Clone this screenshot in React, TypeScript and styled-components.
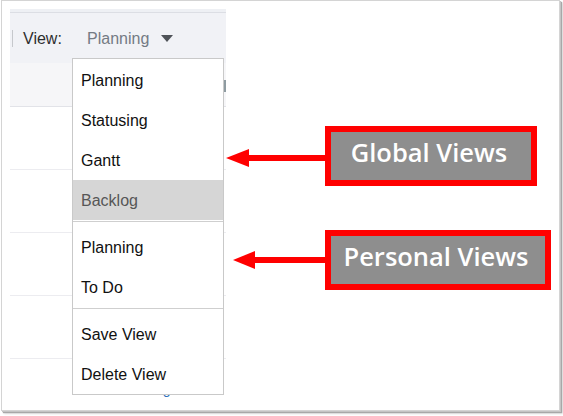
import styled, { createGlobalStyle } from "styled-components";

const GlobalStyle = createGlobalStyle`
  html, body {
    margin: 0;
    padding: 0;
    background: #ffffff;
  }
  body {
    width: 563px;
    height: 416px;
    overflow: hidden;
    font-family: "Liberation Sans", Arial, sans-serif;
  }
`;

const Window = styled.div`
  position: relative;
  margin-left: 1px;
  width: 559px;
  height: 411px;
  border: 1px solid #d4d4d4;
  background: #ffffff;
  box-shadow: 1px 1px 0 #c4c4c4, 2px 2px 1px #a8a8a8, 3px 3px 2px rgba(0, 0, 0, 0.12);
  padding: 8px 0 0 8px;
  box-sizing: border-box;
`;

const Panel = styled.div`
  width: 216px;
  height: 402px;
  overflow: hidden;
  display: flex;
  flex-direction: column;
`;

const TopStrip = styled.div`
  height: 3px;
  flex-shrink: 0;
  background: #eef0f4;
  border-bottom: 1px solid #dcdee4;
`;

const Toolbar = styled.div`
  height: 50px;
  flex-shrink: 0;
  background: #f1f2f6;
  display: flex;
  align-items: center;
  padding-left: 2px;
  padding-top: 1px;
  box-sizing: border-box;
  font-size: 16px;
`;

const Divider = styled.div`
  width: 1px;
  height: 17px;
  background: #c6c8cc;
  margin-right: 10px;
`;

const Label = styled.span`
  color: #2e2e2e;
  width: 64px;
`;

const Current = styled.span`
  color: #747b84;
  margin-right: 12px;
`;

const Caret = styled.span`
  width: 0;
  height: 0;
  border-left: 6px solid transparent;
  border-right: 6px solid transparent;
  border-top: 7px solid #4f5358;
`;

const SubHeader = styled.div`
  height: 26px;
  flex-shrink: 0;
  background: #f6f6f8;
  border-bottom: 1px solid #e2e3e8;
  display: flex;
  justify-content: flex-end;
  padding-top: 17px;
`;

const Handle = styled.div`
  width: 3px;
  height: 12px;
  background: #8e9ba1;
`;

const Row = styled.div`
  height: 40px;
  flex-shrink: 0;
  border-bottom: 1px solid #ececf0;
  display: flex;
  align-items: flex-start;
  padding: 22px 0 0 106px;
`;

const LinkText = styled.span`
  color: #2a6ebb;
  font-size: 14px;
  line-height: 16px;
`;

const Menu = styled.div`
  position: absolute;
  left: 70px;
  top: 57px;
  width: 150px;
  background: #ffffff;
  border: 1px solid #c9c9c9;
  padding-top: 1px;
`;

const Item = styled.div<{ $active?: boolean }>`
  height: 40px;
  box-sizing: border-box;
  padding: 2px 0 0 8px;
  display: flex;
  align-items: center;
  font-size: 16px;
  color: ${(p) => (p.$active ? "#565656" : "#111111")};
  background: ${(p) => (p.$active ? "#d6d6d6" : "transparent")};
`;

const Separator = styled.div`
  height: 1px;
  background: #cfcfcf;
  margin: 1px 0 5px;
`;

const Callout = styled.div<{ $left: number; $top: number; $width: number }>`
  position: absolute;
  left: ${(p) => p.$left}px;
  top: ${(p) => p.$top}px;
  width: ${(p) => p.$width}px;
  height: 60px;
  box-sizing: border-box;
  border: 6px solid #ff0000;
  background: #8e8e8e;
  color: #ffffff;
  font-family: "Open Sans", "Noto Sans", sans-serif;
  font-weight: 600;
  font-size: 25.5px;
  display: flex;
  align-items: center;
  justify-content: center;
  padding: 0 4px 8px 0;
`;

const Arrow = styled.svg<{ $left: number; $top: number }>`
  position: absolute;
  left: ${(p) => p.$left}px;
  top: ${(p) => p.$top}px;
`;

const globalViews = ["Planning", "Statusing", "Gantt", "Backlog"];
const personalViews = ["Planning", "To Do"];
const actions = ["Save View", "Delete View"];

const PointerArrow = ({ left, top, length, head }: { left: number; top: number; length: number; head: number }) => (
  <Arrow $left={left} $top={top} width={length} height={20} viewBox={`0 0 ${length} 20`}>
    <polygon points={`0,10 ${head},1 ${head},19`} fill="#ff0000" />
    <rect x={head - 1} y={7} width={length - head + 1} height={6} fill="#ff0000" />
  </Arrow>
);

export default function App() {
  return (
    <>
      <GlobalStyle />
      <Window>
        <Panel>
          <TopStrip />
          <Toolbar>
            <Divider />
            <Label>View:</Label>
            <Current>Planning</Current>
            <Caret />
          </Toolbar>
          <SubHeader>
            <Handle />
          </SubHeader>
          <Row />
          <Row />
          <Row />
          <Row />
          <Row>
            <LinkText>Planning</LinkText>
          </Row>
        </Panel>

        <Menu>
          {globalViews.map((v) => (
            <Item key={"g" + v} $active={v === "Backlog"}>
              {v}
            </Item>
          ))}
          <Separator />
          {personalViews.map((v) => (
            <Item key={"p" + v}>{v}</Item>
          ))}
          <Separator />
          {actions.map((v) => (
            <Item key={v}>{v}</Item>
          ))}
        </Menu>

        <PointerArrow left={224} top={147} length={101} head={23} />
        <Callout $left={323} $top={125} $width={212}>
          Global Views
        </Callout>

        <PointerArrow left={231} top={249} length={94} head={22} />
        <Callout $left={323} $top={229} $width={226}>
          Personal Views
        </Callout>
      </Window>
    </>
  );
}
